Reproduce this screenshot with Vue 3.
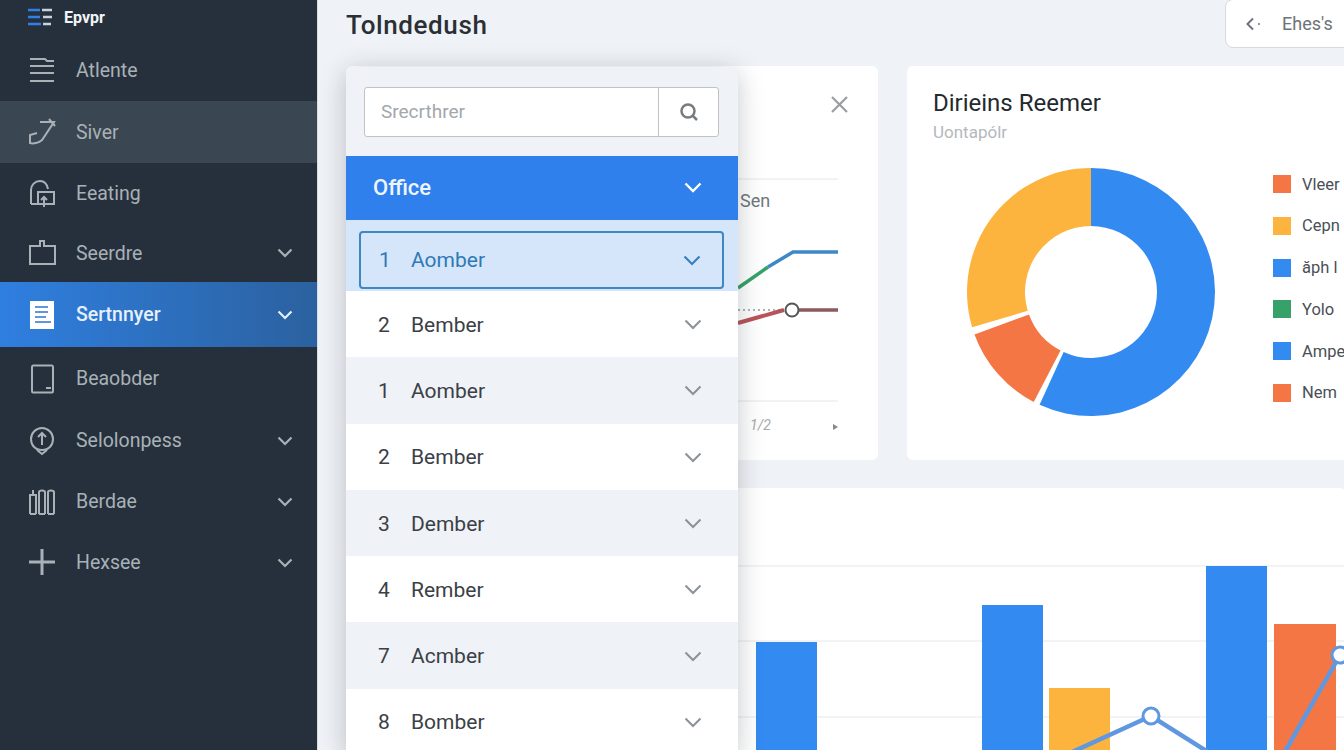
<script setup>
const navItems = [
  { label: "Atlente", h: 61, arrow: false, icon: ["M2 3H17L19 5H26", "M2 10H26", "M2 17H26", "M2 25H26"] },
  { label: "Siver", h: 62, hover: true, arrow: false, icon: ["M12 5H26L14 23C11 26 5 27 2 26V18L9 16", "M21 2L27 9"] },
  { label: "Eeating", h: 61, arrow: false, icon: ["M3 25V11C3 6 7 2 12 2C16 2 19 5 20 10", "M3 25H9", "M10 13H26V25H10Z", "M16 28V18M13 21L16 18L19 21"] },
  { label: "Seerdre", h: 58, arrow: true, icon: ["M2 8H12V3H16V8H27V26H2Z"] },
  { label: "Sertnnyer", h: 65, active: true, arrow: true, icon: [] },
  { label: "Beaobder", h: 63, arrow: false, icon: ["M5 1.5H24Q25 1.5 25 3V27Q25 28.5 24 28.5H5Q4 28.5 4 27V3Q4 1.5 5 1.5Z", "M18 24H23"] },
  { label: "Selolonpess", h: 61, arrow: true, icon: ["M14 24C7 24 3 19 3 13C3 7 8 2 14 2C20 2 25 7 25 13C25 19 21 24 14 24Z", "M14 19V7M10 11L14 7L18 11", "M9 24L14 28L19 24"] },
  { label: "Berdae", h: 61, arrow: true, icon: ["M2 27V8H8V27", "M11 27V5C11 3 17 3 17 5V27", "M20 27V5C20 3 26 3 26 5V27", "M2 27H8M11 27H17M20 27H26", "M5 8V3"] },
  { label: "Hexsee", h: 61, arrow: true, bold: true, icon: ["M1 14H27", "M14 1V27"] },
];

const rows = [
  { n: 2, label: "Bember" },
  { n: 1, label: "Aomber" },
  { n: 2, label: "Bember" },
  { n: 3, label: "Dember" },
  { n: 4, label: "Rember" },
  { n: 7, label: "Acmber" },
  { n: 8, label: "Bomber" },
];

const legend = [
  { color: "#f47645", label: "Vleer" },
  { color: "#fdb43e", label: "Cepn" },
  { color: "#338af0", label: "ăph l" },
  { color: "#36a269", label: "Yolo" },
  { color: "#338af0", label: "Ampe" },
  { color: "#f47645", label: "Nem" },
];

// donut slices, degrees clockwise from the top
const cx = 125;
const cy = 125;
function point(r, deg) {
  const a = ((deg - 90) * Math.PI) / 180;
  return (cx + r * Math.cos(a)).toFixed(2) + " " + (cy + r * Math.sin(a)).toFixed(2);
}
function slice(from, to) {
  const big = to - from > 180 ? 1 : 0;
  return (
    "M" + point(124, from) +
    " A124 124 0 " + big + " 1 " + point(124, to) +
    " L" + point(66, to) +
    " A66 66 0 " + big + " 0 " + point(66, from) + "Z"
  );
}
const slices = [
  { color: "#338af0", d: slice(0, 204.5) },
  { color: "#f47645", d: slice(207.5, 250) },
  { color: "#fdb43e", d: slice(253.5, 360) },
];

const bars = [
  { x: 410, y: 154, w: 61, color: "#338af0" },
  { x: 636, y: 117, w: 61, color: "#338af0" },
  { x: 703, y: 200, w: 61, color: "#fdb43e" },
  { x: 860, y: 78, w: 61, color: "#338af0" },
  { x: 928, y: 136, w: 62, color: "#f47645" },
];
</script>

<template>
  <div class="page">
    <aside class="sidebar">
      <div class="brand">
        <svg class="brand-icon" width="24" height="18" viewBox="0 0 24 18">
          <path d="M0 2H12M0 9H12M0 16H13" stroke="#2f7fe6" stroke-width="2.4" />
          <path d="M14 2H24M15 9H24M15 16H23" stroke="#c8d2dc" stroke-width="2.4" />
        </svg>
        <span>Epvpr</span>
      </div>
      <div
        v-for="item in navItems"
        :key="item.label"
        class="nav-item"
        :class="{ hover: item.hover, active: item.active }"
        :style="{ height: item.h + 'px' }"
      >
        <svg class="nav-icon" width="28" height="30" viewBox="0 0 28 30" fill="none" stroke="currentColor" :stroke-width="item.bold ? 3 : 2">
          <template v-if="item.active">
            <rect x="2" y="1" width="24" height="28" fill="#fff" stroke="none" />
            <path d="M7 7H20M7 12H20M7 17H18M7 22H23" stroke="#2f74c9" stroke-width="1.6" />
          </template>
          <path v-for="d in item.icon" :key="d" :d="d" />
        </svg>
        <span class="nav-label">{{ item.label }}</span>
        <svg v-if="item.arrow" class="nav-arrow" width="16" height="10" viewBox="0 0 16 10" fill="none" stroke="currentColor" stroke-width="2.2">
          <path d="M1.5 1.5L8 8L14.5 1.5" />
        </svg>
      </div>
    </aside>

    <main class="main">
      <header class="topbar">
        <h1>Tolndedush</h1>
        <button class="back-btn">
          <svg width="16" height="14" viewBox="0 0 16 14" fill="none" stroke="#6e7378" stroke-width="2">
            <path d="M7 1.5L1.5 7L7 12.5" />
            <circle cx="13" cy="7" r="1" fill="#6e7378" stroke="none" />
          </svg>
          <span>Ehes's</span>
        </button>
      </header>

      <div class="top-cards">
        <section class="card line-card">
          <svg width="532" height="394" viewBox="0 0 532 394" fill="none">
            <path d="M486 31L501 46M501 31L486 46" stroke="#9a9ea2" stroke-width="2.2" />
            <path d="M392 113H492M392 335H492" stroke="#e4e6e9" stroke-width="1" />
            <text x="394" y="141" class="sen">Sen</text>
            <path d="M392 222L422 201" stroke="#36a269" stroke-width="3.5" />
            <path d="M422 201L447 186H492" stroke="#3f88c8" stroke-width="3.5" />
            <path d="M392 257L438 244" stroke="#b9545a" stroke-width="4" />
            <path d="M392 244H438" stroke="#666" stroke-width="1.2" stroke-dasharray="2 3" />
            <path d="M446 244H492" stroke="#8b5a5c" stroke-width="3.5" />
            <circle cx="446" cy="244" r="6.5" fill="#fff" stroke="#555" stroke-width="2" />
            <text x="404" y="364" class="page-no">1/2</text>
            <path d="M487 358L492 361L487 364Z" fill="#888" />
          </svg>
        </section>

        <section class="card donut-card">
          <h2>Dirieins Reemer</h2>
          <p>Uontapólr</p>
          <div class="donut-body">
            <svg class="donut" width="250" height="250" viewBox="0 0 250 250">
              <path v-for="s in slices" :key="s.color" :d="s.d" :fill="s.color" />
            </svg>
            <ul class="legend">
              <li v-for="l in legend" :key="l.label">
                <i :style="{ background: l.color }"></i>
                <span>{{ l.label }}</span>
              </li>
            </ul>
          </div>
        </section>
      </div>

      <section class="card bar-card">
        <svg width="1000" height="262" viewBox="0 0 1000 262" fill="none">
          <path d="M392 78H1000M392 153H1000M392 229H1000" stroke="#eef0f2" stroke-width="1.5" />
          <rect v-for="b in bars" :key="b.x" :x="b.x" :y="b.y" :width="b.w" height="300" :fill="b.color" />
          <path d="M700 276L805 228L900 288L925 288L994 167" stroke="#5f98e0" stroke-width="4.5" />
          <circle cx="805" cy="228" r="8" fill="#fff" stroke="#5f98e0" stroke-width="3" />
          <circle cx="994" cy="167" r="8" fill="#fff" stroke="#5f98e0" stroke-width="3" />
        </svg>
      </section>

      <div class="dropdown">
        <div class="search-wrap">
          <div class="search">
            <span class="search-text">Srecrthrer</span>
            <span class="search-btn">
              <svg width="20" height="20" viewBox="0 0 20 20" fill="none" stroke="#777c80" stroke-width="2.5">
                <circle cx="9" cy="9" r="6.5" />
                <path d="M13.5 13.5L18 18" />
              </svg>
            </span>
          </div>
        </div>
        <div class="office">
          <span>Office</span>
          <svg width="18" height="11" viewBox="0 0 18 11" fill="none" stroke="#fff" stroke-width="2.4">
            <path d="M1.5 1.5L9 9L16.5 1.5" />
          </svg>
        </div>
        <div class="selected-wrap">
          <div class="selected">
            <span class="num">1</span>
            <span class="name">Aomber</span>
            <svg width="18" height="11" viewBox="0 0 18 11" fill="none" stroke="#3b80bd" stroke-width="2.2">
              <path d="M1.5 1.5L9 9L16.5 1.5" />
            </svg>
          </div>
        </div>
        <div v-for="(r, i) in rows" :key="i" class="row" :class="{ alt: i % 2 === 1 }">
          <span class="num">{{ r.n }}</span>
          <span class="name">{{ r.label }}</span>
          <svg width="18" height="11" viewBox="0 0 18 11" fill="none" stroke="#8d9297" stroke-width="2">
            <path d="M1.5 1.5L9 9L16.5 1.5" />
          </svg>
        </div>
      </div>
    </main>
  </div>
</template>

<style>
html,
body {
  margin: 0;
  overflow: hidden;
}
</style>

<style scoped>
.page {
  display: flex;
  width: 1344px;
  height: 750px;
  overflow: hidden;
  font-family: Roboto, "Liberation Sans", sans-serif;
  background: #eff2f6;
}
.sidebar {
  flex: 0 0 318px;
  box-sizing: border-box;
  background: #25303c;
  border-right: 1px solid #d9dde2;
}
.brand {
  display: flex;
  align-items: center;
  height: 40px;
  padding: 0 0 6px 28px;
  box-sizing: border-box;
  color: #f1f4f6;
  font-size: 16px;
  font-weight: 700;
}
.brand-icon {
  margin-right: 12px;
}
.nav-item {
  display: flex;
  align-items: center;
  padding: 0 24px 0 28px;
  color: #a9b1b7;
  font-size: 19.5px;
}
.nav-item.hover {
  background: #3a4651;
}
.nav-item.active {
  background: linear-gradient(90deg, #2f7fe0, #2b619f);
  color: #e6f0fb;
  font-weight: 500;
}
.nav-label {
  flex: 1;
  margin-left: 20px;
}
.main {
  position: relative;
  flex: 1;
  min-width: 0;
  padding-left: 28px;
  overflow: hidden;
}
.topbar {
  display: flex;
  justify-content: space-between;
  height: 66px;
}
.topbar h1 {
  margin: 11px 0 0;
  font-size: 26px;
  line-height: 28px;
  font-weight: 500;
  letter-spacing: 0.6px;
  color: #2a2f35;
}
.back-btn {
  display: flex;
  align-items: center;
  gap: 20px;
  width: 130px;
  height: 49px;
  margin: -1px -11px 0 0;
  padding: 0 0 0 20px;
  border: 1px solid #d6dade;
  border-radius: 8px;
  background: #fff;
  color: #6e7378;
  font: 18px Roboto, "Liberation Sans", sans-serif;
}
.top-cards {
  display: grid;
  grid-template-columns: 532px 480px;
  gap: 29px;
  height: 394px;
}
.card {
  background: #fff;
  border-radius: 6px;
}
.line-card svg {
  display: block;
}
.sen {
  font-size: 18px;
  fill: #70767c;
}
.page-no {
  font-size: 14px;
  font-style: italic;
  fill: #a5a9ad;
}
.donut-card {
  padding: 22px 0 0 26px;
  overflow: hidden;
}
.donut-card h2 {
  margin: 0;
  font-size: 24px;
  line-height: 30px;
  font-weight: 400;
  color: #24292e;
}
.donut-card p {
  margin: 4px 0 0;
  font-size: 17px;
  line-height: 20px;
  color: #b4b8bc;
}
.donut-body {
  display: flex;
  align-items: flex-start;
  margin-top: 25px;
  margin-left: 33px;
}
.donut {
  display: block;
  flex: none;
}
.legend {
  flex: none;
  list-style: none;
  margin: 0 0 0 57px;
  padding: 8px 0 0;
  display: flex;
  flex-direction: column;
  gap: 23.8px;
  font-size: 16.5px;
  color: #4a5056;
}
.legend li {
  display: flex;
  align-items: center;
  gap: 11px;
  height: 18px;
}
.legend i {
  width: 18px;
  height: 18px;
  flex: none;
}
.bar-card {
  margin-top: 28px;
  width: 1000px;
  height: 262px;
  overflow: hidden;
}
.bar-card svg {
  display: block;
}
.dropdown {
  position: absolute;
  top: 67px;
  left: 28px;
  width: 392px;
  border-radius: 10px 10px 0 0;
  background: #eff3f7;
  box-shadow: 0 4px 26px rgba(30, 40, 50, 0.25);
}
.search-wrap {
  height: 89px;
  padding: 20px 19px 0 18px;
  box-sizing: border-box;
}
.search {
  display: flex;
  height: 50px;
  box-sizing: border-box;
  border: 1px solid #bfc3c6;
  border-radius: 3px;
  background: #fff;
}
.search-text {
  flex: 1;
  padding-left: 16px;
  line-height: 48px;
  font-size: 19px;
  color: #a3a7ab;
}
.search-btn {
  display: flex;
  align-items: center;
  justify-content: center;
  width: 59px;
  border-left: 1px solid #bfc3c6;
}
.office {
  display: flex;
  align-items: center;
  justify-content: space-between;
  height: 64px;
  padding: 0 36px 2px 27px;
  box-sizing: border-box;
  background: #2f80ec;
  color: #eef5fe;
  font-size: 22px;
  font-weight: 500;
}
.selected-wrap {
  height: 71px;
  padding: 11px 14px 2px 13px;
  box-sizing: border-box;
  background: #d5e6fb;
}
.selected {
  display: flex;
  align-items: center;
  height: 58px;
  box-sizing: border-box;
  padding-right: 21px;
  border: 2px solid #3f86c4;
  border-radius: 4px;
  color: #3079b5;
  font-size: 21px;
}
.selected .num {
  width: 50px;
  padding-left: 18px;
  box-sizing: border-box;
}
.selected .name {
  flex: 1;
}
.row {
  display: flex;
  align-items: center;
  height: 66.3px;
  box-sizing: border-box;
  padding: 1px 36px 0 32px;
  background: #fff;
  color: #3b4046;
  font-size: 21px;
}
.row.alt {
  background: #eff2f6;
}
.row .num {
  width: 33px;
}
.row .name {
  flex: 1;
}
</style>
